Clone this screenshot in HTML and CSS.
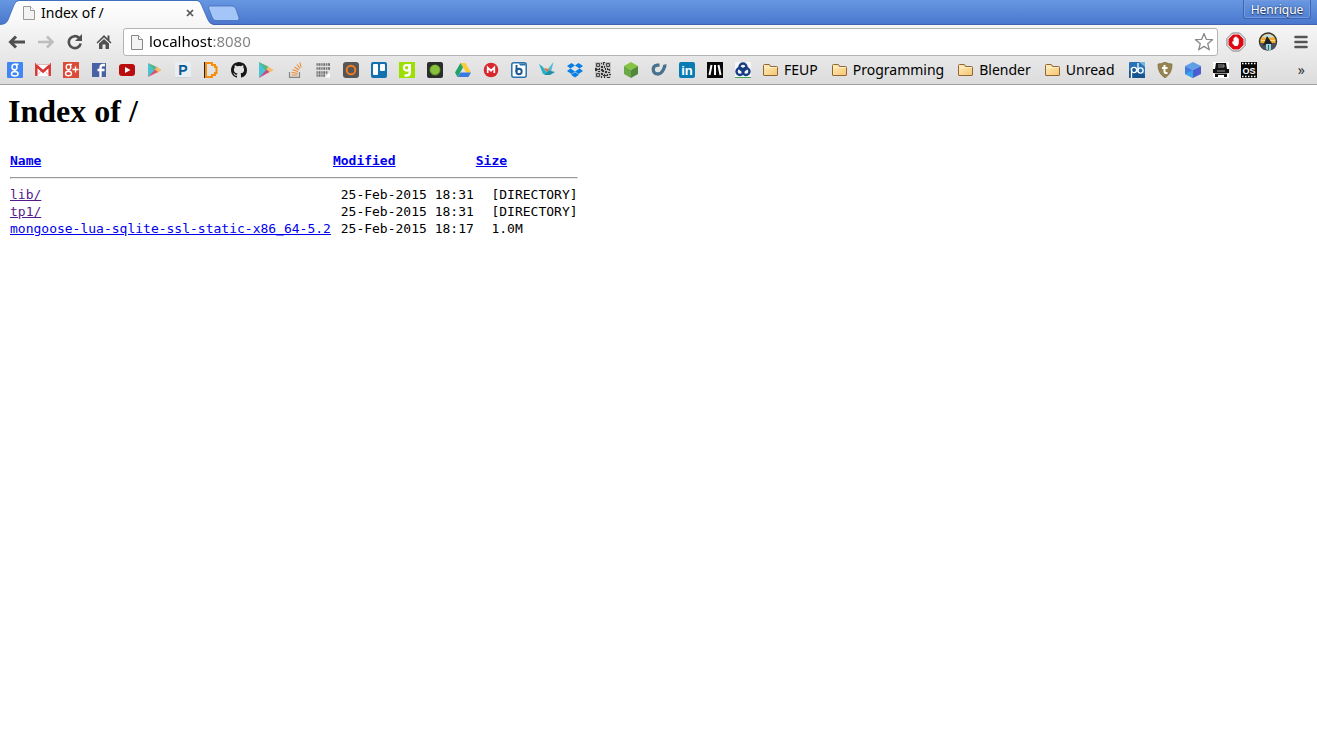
FILE: index.html
```html
<!DOCTYPE html>
<html lang="en">
<head>
<meta charset="utf-8">
<title>Index of /</title>
<link rel="stylesheet" href="styles.css">
</head>
<body>
<header class="browser">
  <div class="titlebar">
    <div class="tab">
      <svg class="tab-shape" viewBox="0 0 214 25" preserveAspectRatio="none" aria-hidden="true"><defs><linearGradient id="tabfill" x1="0" y1="0" x2="0" y2="1"><stop offset="0" stop-color="#fff"/><stop offset="1" stop-color="#f6f6f6"/></linearGradient></defs><path d="M0 25V24.5Q6 24.500 8 20L14 5Q15.500 1 19 1H197Q200 1 201.500 5L208 20Q209.500 24 214 25Z" fill="url(#tabfill)"/><path d="M0 24.500Q6 24.500 8 20L14 5Q15.500 .5 19 .5H197Q200 .5 201.500 5L208 20Q209.500 24 214 24.500" fill="none" stroke="#355fae" stroke-opacity=".7"/></svg>
      <svg class="page-icon" viewBox="0 0 12 14"><path d="M.5.5H7.500L11.500 4.500V13.500H.5Z" fill="#f3f3f3" stroke="#999"/><path d="M7.500.5V4.500H11.500" fill="#fff" stroke="#999"/></svg>
      <span class="tab-title">Index of /</span>
      <button class="tab-close" aria-label="Close tab"><svg viewBox="0 0 8 8"><path d="M1 1L7 7M7 1L1 7" stroke="#555" stroke-width="1.700"/></svg></button>
    </div>
    <button class="new-tab" aria-label="New tab"><svg viewBox="0 0 34 16"><path d="M3 1H25Q28 1 29 4L32 13Q32.500 15.500 30 15.500H9Q6.500 15.500 5.500 13L1.500 3Q1 1 3 1Z" fill="#a3c5f7" stroke="#4066b4" stroke-opacity=".7"/></svg></button>
    <button class="profile">Henrique</button>
  </div>
  <div class="toolbar">
    <div class="nav">
      <button class="tool" aria-label="Back"><svg viewBox="0 0 18 16"><path d="M2.500 8H17M8 2.500L2.500 8L8 13.500" fill="none" stroke="#505050" stroke-width="3"/></svg></button>
      <button class="tool" aria-label="Forward"><svg viewBox="0 0 18 16"><path d="M1 8H15.500M10 2.500L15.500 8L10 13.500" fill="none" stroke="#bdbdbd" stroke-width="2.500"/></svg></button>
      <button class="tool" aria-label="Reload"><svg viewBox="0 0 18 16"><path d="M13 3.800A6 6 0 1 0 14.700 9.500" fill="none" stroke="#505050" stroke-width="2.600"/><path d="M16 0V7H9Z" fill="#505050"/></svg></button>
      <button class="tool" aria-label="Home"><svg viewBox="0 0 18 16"><path d="M9 1L1.500 8.500L2.500 9.500L9 3.500L15.500 9.500L16.500 8.500L14.500 6.500V1.500H12.500V4.500Z" fill="#505050"/><path d="M4 9.500L9 5L14 9.500V15H10.500V10.500H7.500V15H4Z" fill="#505050"/></svg></button>
    </div>
    <div class="omnibox">
      <svg class="page-icon" viewBox="0 0 12 15"><path d="M.5.5H7.500L11.500 4.500V14.500H.5Z" fill="#f3f3f3" stroke="#888"/><path d="M7.500.5V4.500H11.500" fill="#fff" stroke="#888"/></svg>
      <input class="address" type="text" value="localhost:8080" aria-label="Address">
      <button class="star" aria-label="Bookmark this page"><svg viewBox="0 0 20 20"><path d="M10 1.500L12.300 7.300L18.500 7.700L13.700 11.700L15.300 17.800L10 14.400L4.700 17.800L6.300 11.700L1.500 7.700L7.700 7.300Z" fill="#fff" stroke="#888" stroke-width="1.300" stroke-linejoin="round"/></svg></button>
    </div>
    <div class="extensions">
      <button class="extension" aria-label="Ad blocker"><svg viewBox="0 0 20 20"><path d="M6.500 1H13.500L19 6.500V13.500L13.500 19H6.500L1 13.500V6.500Z" fill="#fff" stroke="#777"/><path d="M7 2.500H13L17.500 7V13L13 17.500H7L2.500 13V7Z" fill="#dc0713"/><path d="M6 9.500L7.500 9.500V6H8.500V5H9.500V4.500H10.500V5.500H11.700V6.500H12.800V11.500L11.500 14H8.700L6.500 11.500Z" fill="#fff"/></svg></button>
      <button class="extension" aria-label="Sunset extension"><svg viewBox="0 0 20 20"><circle cx="10" cy="9.500" r="8.500" fill="#f2a92d" stroke="#333" stroke-width="1.500"/><path d="M3.500 5.500Q10-1 16.500 5.500Z" fill="#bce1e7"/><path d="M3 8.500H17" stroke="#ffe18a"/><path d="M1.500 11H18.500L17 16L13.500 18H6L3 15.500Z" fill="#4c5058"/><path d="M9 4L14.500 12H12V17H8V12L5 14Z" fill="#202126"/><path d="M8 12H13V18L11 19L8 17Z" fill="#9bd5dd"/><path d="M10.500 13V18" stroke="#276474"/></svg></button>
      <button class="extension menu" aria-label="Menu"><svg viewBox="0 0 20 20"><path d="M4.500 5H15.500M4.500 10H15.500M4.500 15H15.500" stroke="#555" stroke-width="2.600" stroke-linecap="round"/></svg></button>
    </div>
  </div>
  <nav class="bookmarks" aria-label="Bookmarks">
    <a href="#" aria-label="Google"><svg viewBox="0 0 16 16"><rect width="16" height="16" rx="1" fill="#4285f4"/><g fill="none" stroke="#fff" stroke-width="1.500"><ellipse cx="7.500" cy="5" rx="2.500" ry="2.800"/><path d="M8 2.200H11.500M8.500 7.500Q6 9 8.500 9.500"/><ellipse cx="7.800" cy="11.700" rx="3.300" ry="2.300"/></g></svg></a>
    <a href="#" aria-label="Gmail"><svg viewBox="0 0 16 16"><rect y="2" width="16" height="12" rx="1" fill="#fff"/><path d="M1.300 14V3.500L8 9.500L14.700 3.500V14" fill="none" stroke="#d93535" stroke-width="2.500"/><path d="M2 13.500L6 9M14 13.500L10 9M1 2.500H15" stroke="#dda4a4" stroke-width=".8"/></svg></a>
    <a href="#" aria-label="Google Plus"><svg viewBox="0 0 16 16"><rect width="16" height="16" fill="#dc4a38"/><g fill="none" stroke="#fff" stroke-width="1.400"><ellipse cx="5.500" cy="5" rx="2.300" ry="2.600"/><path d="M6 2.400H9M6.500 7.500Q4 9 6.500 9.500"/><ellipse cx="5.500" cy="11.500" rx="3" ry="2.200"/></g><path d="M12.500 4.500V10.500M9.500 7.500H15.500" stroke="#fff" stroke-width="1.300"/></svg></a>
    <a href="#" aria-label="Facebook"><svg viewBox="0 0 16 16"><rect x="1" y="1" width="14" height="14" fill="#4862a3"/><path d="M14 3H12Q9.500 3 9.500 6V15M6.500 8H13.500" fill="none" stroke="#fff" stroke-width="2.300"/></svg></a>
    <a href="#" aria-label="YouTube"><svg viewBox="0 0 16 16"><rect y="2" width="16" height="12" rx="3" fill="#b90d0d"/><path d="M6 5L11.500 8L6 11Z" fill="#fff"/></svg></a>
    <a href="#" aria-label="Google Play"><svg viewBox="0 0 16 16"><path d="M1 1L9 8L1 15Z" fill="#49c3d4"/><path d="M1 1L11 5.500L8 9Z" fill="#52b584"/><path d="M9.500 5L14 7.500Q14.500 8 14 8.500L10 11L7.500 8Z" fill="#f5ba6a"/><path d="M1 15L8 7.500L11 10Z" fill="#db5270"/></svg></a>
    <a href="#" aria-label="Pandora"><svg viewBox="0 0 16 16"><rect width="16" height="16" rx="1" fill="#e9eef3"/><path d="M0 15.500H16" stroke="#c9d4dc"/><text x="8" y="13" class="sans" fill="#075a95" font-size="14">P</text></svg></a>
    <a href="#" aria-label="D bookmark"><svg viewBox="0 0 16 16"><path d="M3 1H9V3H12V5H13.500V11H12V13H9V15H3Z" fill="none" stroke="#f88c0b" stroke-width="2"/><path d="M1.500 0V16" stroke="#222"/></svg></a>
    <a href="#" aria-label="GitHub"><svg viewBox="0 0 16 16"><path fill="#171717" d="M8 0C3.580 0 0 3.580 0 8c0 3.540 2.290 6.530 5.470 7.590.4.070.55-.17.55-.38v-1.490c-2.230.48-2.690-.94-2.690-.94-.36-.92-.89-1.170-.89-1.170-.73-.5.05-.49.05-.49.81.06 1.240.83 1.240.83.72 1.230 1.880.88 2.340.67.07-.52.28-.87.51-1.070-1.780-.2-3.650-.89-3.650-3.950 0-.87.31-1.590.82-2.150-.08-.2-.36-1.020.08-2.120 0 0 .67-.21 2.200.82A7.600 7.600 0 0 1 8 3.880c.68 0 1.360.09 2 .27 1.530-1.040 2.200-.82 2.200-.82.44 1.100.16 1.920.08 2.120.51.56.82 1.270.82 2.150 0 3.070-1.870 3.750-3.650 3.950.29.25.54.73.54 1.480v2.180c0 .21.15.46.55.38A8 8 0 0 0 16 8c0-4.420-3.580-8-8-8Z"/></svg></a>
    <a href="#" aria-label="Google Play apps"><svg viewBox="0 0 16 16"><path d="M0 0L9 8L0 16Z" fill="#49c3d4"/><path d="M0 0L10 5L7 9Z" fill="#52b584"/><path d="M9 4.500L14 7.500Q14.500 8 14 8.500L9.500 11L7 8Z" fill="#f5ba6a"/><path d="M0 16L7.500 7.500L10.500 10Z" fill="#cb4a81"/></svg></a>
    <a href="#" aria-label="Stack Overflow"><svg viewBox="0 0 16 16"><path d="M2.500 10V15.300H12.500V10" fill="none" stroke="#858585" stroke-width="1.200"/><path d="M4.500 13H10.500M4.500 10.500L10.700 11.200M5.500 7.800L11 9.500M7.500 5L11.800 8M10 2.500L13 6.500M13 .5L14 5.500" stroke="#ee8a32" stroke-width="1.100"/></svg></a>
    <a href="#" aria-label="Binary notes"><svg viewBox="0 0 16 16"><path d="M1 1H15V11L10 15H1Z" fill="#e0e0e0"/><g fill="none" stroke="#6e6e6e" stroke-dasharray="1.300 .7 2 .8"><path d="M1.500 2.500H15M1.500 6.500H15M1.500 10.500H13M1.500 13.500H10" stroke-width="2.500"/></g><path d="M10 15.500L15 10.500V15.500Z" fill="#fff"/></svg></a>
    <a href="#" aria-label="Orange ring"><svg viewBox="0 0 16 16"><rect width="16" height="16" rx="3" fill="#565656"/><circle cx="8" cy="8" r="4.300" fill="none" stroke="#f27c22" stroke-width="1.900"/></svg></a>
    <a href="#" aria-label="Trello"><svg viewBox="0 0 16 16"><rect width="16" height="16" rx="2" fill="#1271ae"/><rect x="2" y="2" width="5" height="11" rx="1" fill="#fff"/><rect x="9" y="2" width="5" height="7" rx="1" fill="#fff"/></svg></a>
    <a href="#" aria-label="Green nine"><svg viewBox="0 0 16 16"><rect width="16" height="16" fill="#9be000"/><path d="M10.800 2V10.500Q10.800 13.500 7.500 13.500H5.500" fill="none" stroke="#fff" stroke-width="2.400"/><circle cx="7.700" cy="5.800" r="2.800" fill="none" stroke="#fff" stroke-width="2.200"/></svg></a>
    <a href="#" aria-label="Green circle"><svg viewBox="0 0 16 16"><rect width="16" height="16" rx="2" fill="#292d2b"/><circle cx="8" cy="8" r="5.500" fill="#5c8c26"/><circle cx="8" cy="7.800" r="4.700" fill="#87c13b"/></svg></a>
    <a href="#" aria-label="Google Drive"><svg viewBox="0 0 16 16"><path d="M5.500 1H10.500L16 10.500H11Z" fill="#fbcb37"/><path d="M5.500 1L0 10.500L2.500 15L8 5.500Z" fill="#21a366"/><path d="M5.500 10.500H16L13.500 15H2.500Z" fill="#3b79e1"/></svg></a>
    <a href="#" aria-label="Mega"><svg viewBox="0 0 16 16"><circle cx="8" cy="8" r="7.300" fill="#d9272e"/><path d="M4.700 11V5.500L8 8.700L11.300 5.500V11" fill="none" stroke="#fff" stroke-width="1.700"/></svg></a>
    <a href="#" aria-label="B bookmark"><svg viewBox="0 0 16 16"><rect x=".8" y=".8" width="14.400" height="14.400" rx="2" fill="#fff" stroke="#2771ac" stroke-width="1.500"/><path d="M8 1.500H14.500V3.500H9Z" fill="#2771ac"/><path d="M5.500 3V10" stroke="#1d5690" stroke-width="1.900"/><circle cx="8" cy="9.500" r="2.700" fill="none" stroke="#1d5690" stroke-width="1.900"/></svg></a>
    <a href="#" aria-label="Origami bird"><svg viewBox="0 0 16 16"><path d="M0 2L3.500 4.500L7 9L11 13L4 12Z" fill="#26b3c9"/><path d="M14.500 0L9 7L7 12L12 10Z" fill="#4cbdd0"/><path d="M5 6L10 7L8 10Z" fill="#f26b3e"/><path d="M10 8.500L16 10L11 13L5 13Z" fill="#208fac"/></svg></a>
    <a href="#" aria-label="Dropbox"><svg viewBox="0 0 16 16"><path d="M4.500 1L8 3.500L3.500 6.500L0 4ZM11.500 1L16 4L12.500 6.500L8 3.500ZM3.500 6.500L8 9.500L4.500 12L0 9ZM12.500 6.500L16 9L11.500 12L8 9.500ZM8 10.200L12 12.800L8 15.500L4 12.800Z" fill="#087ee5"/></svg></a>
    <a href="#" aria-label="QR code"><svg viewBox="0 0 16 16"><rect width="16" height="16" fill="#c4c4c4"/><path d="M1.500 1.500H4.500V4.500H1.500ZM11.500 1.500H14.500V4.500H11.500ZM1.500 11.500H4.500V14.500H1.500Z" fill="#ddd" stroke="#444"/><path d="M6 1H7V2H6ZM8 0H10V1H9V3H8ZM6 4H8V6H6ZM9 4H10V6H9ZM0 6H2V7H4V6H5V8H2V9H0ZM6 7H8V8H9V10H7V9H6ZM10 6H11V8H10ZM12 6H13V7H15V9H14V8H12ZM3 9H5V10H3ZM10 9H12V11H10ZM13 10H15V11H13ZM6 11H8V13H6ZM9 12H10V13H12V12H13V14H10V16H9V14H8V13H9ZM14 12H16V13H14ZM6 14H7V16H6ZM12 15H15V16H12ZM2.500 2.500H3.500V3.500H2.500ZM12.500 2.500H13.500V3.500H12.500ZM2.500 12.500H3.500V13.500H2.500Z" fill="#333"/></svg></a>
    <a href="#" aria-label="Green cube"><svg viewBox="0 0 16 16"><path d="M8 0L15 4L8 8L1 4Z" fill="#83c540"/><path d="M1 4L8 8V16L1 12Z" fill="#69a845"/><path d="M15 4L8 8V16L15 12Z" fill="#51893a"/></svg></a>
    <a href="#" aria-label="Blue swirl"><svg viewBox="0 0 16 16"><path d="M8.500 3.200H6Q2.200 3.800 2.200 7.500Q2.500 12 7 12Q12 11.500 13.800 3.500" fill="none" stroke="#47718c" stroke-width="3.300"/><path d="M12 3L15.500 2L15 6L12.500 6.500Z" fill="#47718c"/></svg></a>
    <a href="#" aria-label="LinkedIn"><svg viewBox="0 0 16 16"><rect width="16" height="16" rx="2" fill="#087bb4"/><text x="8" y="13" class="sans" font-size="13" fill="#fff">in</text></svg></a>
    <a href="#" aria-label="Slanted bars"><svg viewBox="0 0 16 16"><rect width="16" height="16" fill="#080808"/><path d="M4.500 3L2.500 13M8 3V13M11.500 3L13.500 13" stroke="#fff" stroke-width="2"/></svg></a>
    <a href="#" aria-label="Blue knot"><svg viewBox="0 0 16 16"><rect width="16" height="16" fill="#f5f6f8"/><path d="M0 15.500H16" stroke="#43a557"/><g fill="none" stroke="#183d82" stroke-width="2.400"><circle cx="8" cy="5" r="3.500"/><circle cx="5" cy="9.500" r="3.500"/><circle cx="11" cy="9.500" r="3.500"/></g></svg></a>
    <a class="folder" href="#"><svg viewBox="0 0 16 16"><defs><linearGradient id="folder" x1="0" y1="0" x2="1" y2="1"><stop stop-color="#ffedbd"/><stop offset="1" stop-color="#f6c56f"/></linearGradient></defs><path d="M.5 13V3.500Q.5 2.500 1.500 2.500H6Q7 2.500 7.500 4.500H13.500Q14.500 4.500 14.500 5.500V13Q14.500 13.500 14 13.500H1Q.5 13.500 .5 13Z" fill="url(#folder)" stroke="#926634"/><path d="M1.500 5.500H13.500" stroke="#fff0c9"/></svg><span>FEUP</span></a>
    <a class="folder" href="#"><svg viewBox="0 0 16 16"><path d="M.5 13V3.500Q.5 2.500 1.500 2.500H6Q7 2.500 7.500 4.500H13.500Q14.500 4.500 14.500 5.500V13Q14.500 13.500 14 13.500H1Q.5 13.500 .5 13Z" fill="url(#folder)" stroke="#926634"/><path d="M1.500 5.500H13.500" stroke="#fff0c9"/></svg><span>Programming</span></a>
    <a class="folder" href="#"><svg viewBox="0 0 16 16"><path d="M.5 13V3.500Q.5 2.500 1.500 2.500H6Q7 2.500 7.500 4.500H13.500Q14.500 4.500 14.500 5.500V13Q14.500 13.500 14 13.500H1Q.5 13.500 .5 13Z" fill="url(#folder)" stroke="#926634"/><path d="M1.500 5.500H13.500" stroke="#fff0c9"/></svg><span>Blender</span></a>
    <a class="folder" href="#"><svg viewBox="0 0 16 16"><path d="M.5 13V3.500Q.5 2.500 1.500 2.500H6Q7 2.500 7.500 4.500H13.500Q14.500 4.500 14.500 5.500V13Q14.500 13.500 14 13.500H1Q.5 13.500 .5 13Z" fill="url(#folder)" stroke="#926634"/><path d="M1.500 5.500H13.500" stroke="#fff0c9"/></svg><span>Unread</span></a>
    <a href="#" aria-label="PB bookmark"><svg viewBox="0 0 16 16"><rect width="16" height="16" rx="1" fill="#2873b6"/><path d="M0 9L5 5L16 13V16H0Z" fill="#16548d"/><path d="M10 0H16V5Z" fill="#75b6e1"/><g fill="none" stroke="#fff" stroke-width="1.300"><path d="M2.500 16V6M9 10V1"/><circle cx="5" cy="8" r="2.600"/><circle cx="11.500" cy="8.500" r="2.600"/></g></svg></a>
    <a href="#" aria-label="T shield"><svg viewBox="0 0 16 16"><path d="M1 2Q5 2 8 0Q11 2 15 2Q15.500 11 8 16Q.5 11 1 2Z" fill="#97834d" stroke="#776b43" stroke-width=".7"/><path d="M7.500 3V9.500Q7.500 11.500 10.500 11M5 6H10.500" fill="none" stroke="#fff" stroke-width="2"/></svg></a>
    <a href="#" aria-label="Blue cube"><svg viewBox="0 0 16 16"><path d="M8 0L16 4L8 8L0 4Z" fill="#5e9fe5"/><path d="M0 4L8 8V16L0 12Z" fill="#427ce0"/><path d="M16 4L8 8V16L16 12Z" fill="#4b5fd3"/><path d="M0 12L8 8V16Z" fill="#39a5e8"/></svg></a>
    <a href="#" aria-label="Jeep"><svg viewBox="0 0 16 16"><rect width="16" height="16" fill="#fff"/><path d="M3 1H13L14 7H16V11H14V15H11V13H5V15H2V11H0V7H2Z" fill="#111"/><path d="M5 3H11V5H5M5 8V10M7 8V10M9 8V10M11 8V10M1 11.500H15" fill="none" stroke="#bbb" stroke-width=".8"/></svg></a>
    <a href="#" aria-label="OS film"><svg viewBox="0 0 16 16"><rect width="16" height="16" fill="#080808"/><path d="M1 1.500H16M1 14.500H16" stroke="#fff" stroke-width="1.500" stroke-dasharray="1.500 1.500"/><text x="8" y="11.500" class="sans" font-size="9" fill="#fff">OS</text></svg></a>
    <button class="overflow" aria-label="More bookmarks">»</button>
  </nav>
</header>
<main class="listing">
  <h1>Index of /</h1>
  <table>
    <thead>
      <tr><th><a href="#">Name</a></th><th><a href="#">Modified</a></th><th><a href="#">Size</a></th></tr>
      <tr><td colspan="3"><hr></td></tr>
    </thead>
    <tbody>
      <tr><td><a class="visited" href="#">lib/</a></td><td>&nbsp;25-Feb-2015 18:31</td><td>&nbsp;&nbsp;[DIRECTORY]</td></tr>
      <tr><td><a class="visited" href="#">tp1/</a></td><td>&nbsp;25-Feb-2015 18:31</td><td>&nbsp;&nbsp;[DIRECTORY]</td></tr>
      <tr><td><a href="#">mongoose-lua-sqlite-ssl-static-x86_64-5.2</a></td><td>&nbsp;25-Feb-2015 18:17</td><td>&nbsp;&nbsp;1.0M</td></tr>
    </tbody>
  </table>
</main>
</body>
</html>
```
FILE: styles.css
```css
* { box-sizing: border-box; }
body { margin: 0; background: #fff; color: #000; }
button { padding: 0; border: 0; background: none; font: inherit; color: inherit; }
svg { display: block; flex: none; }
.browser {
  font-family: "Noto Sans", "Open Sans", sans-serif;
  background: linear-gradient(#f6f6f6 25px, #dcdcdc 84px);
  border-bottom: 1px solid #a0a0a0;
}

.titlebar {
  display: flex;
  align-items: flex-start;
  height: 25px;
  background: linear-gradient(#6797e1, #4976cd);
  box-shadow: inset 0 -1px #4065ae;
}
.tab {
  position: relative;
  display: flex;
  align-items: center;
  width: 214px;
  height: 25px;
  padding: 0 19px 0 23px;
  font-size: 14px;
}
.tab-shape { position: absolute; inset: 0; width: 100%; height: 100%; }
.page-icon { position: relative; width: 12px; height: 14px; }
.tab-title { position: relative; flex: 1; margin-left: 6px; white-space: nowrap; }
.tab-close { position: relative; }
.tab-close svg { width: 10px; height: 8px; }
.new-tab { margin: 5px 0 0 -7px; }
.new-tab svg { width: 34px; height: 16px; }
.profile {
  width: 68px;
  height: 19px;
  margin: 0 6px 0 auto;
  border: 1px solid #3f66b0;
  border-top: 0;
  border-radius: 0 0 3px 3px;
  box-shadow: inset 0 0 0 1px #7399dc;
  color: #fff;
  font-size: 12px;
  line-height: 20px;
  text-shadow: 0 0 2px #223a68, 0 1px 1px #223a68;
}

.toolbar { display: flex; align-items: center; height: 32px; padding: 3px 6px 1px 8px; }
.nav { display: flex; gap: 11px; margin-right: 10px; }
.tool svg { width: 18px; height: 16px; }
.omnibox {
  display: flex;
  flex: 1;
  align-items: center;
  height: 28px;
  padding: 0 3px 0 7px;
  background: #fff;
  border: 1px solid #b4b4b4;
  border-radius: 3px;
}
.omnibox .page-icon { height: 15px; }
.address {
  flex: 1;
  min-width: 0;
  height: 22px;
  margin: 0 0 2px 6px;
  padding: 0;
  border: 0;
  outline: 0;
  font: 15px "Noto Sans", "Open Sans", sans-serif;
  background: linear-gradient(90deg, #000 63px, #808080 63px);
  background-clip: text;
  -webkit-background-clip: text;
  color: transparent;
}
.star svg { width: 20px; height: 20px; }
.extensions { display: flex; gap: 12px; margin-left: 8px; }
.extension svg { width: 20px; height: 20px; }
.menu { margin-left: 1px; }

.bookmarks { display: flex; align-items: center; gap: 12px; height: 27px; padding: 0 12px 2px 7px; }
.bookmarks a { color: #000; text-decoration: none; }
.bookmarks svg { width: 16px; height: 16px; }
.bookmarks text { text-anchor: middle; font-weight: bold; }
.sans { font-family: "Liberation Sans", sans-serif; }
.bookmarks .folder { display: flex; align-items: center; gap: 5px; padding-right: 2px; font-size: 14px; white-space: nowrap; }
.overflow { margin-left: auto; font-size: 14px; color: #333; }

.listing { padding: 8px; }
.listing h1 { margin: 0 0 21px; font: bold 32px/37px "Liberation Serif", serif; }
.listing table { border-spacing: 2px; font: 13px/15px "DejaVu Sans Mono", monospace; }
.listing th, .listing td { padding: 0; text-align: left; white-space: nowrap; }
.listing hr { margin: 7px 0 6px; border: 1px solid; border-color: #999 #eee #eee #999; }
.listing a { color: #00e; }
.listing .visited { color: #551a8b; }
```
